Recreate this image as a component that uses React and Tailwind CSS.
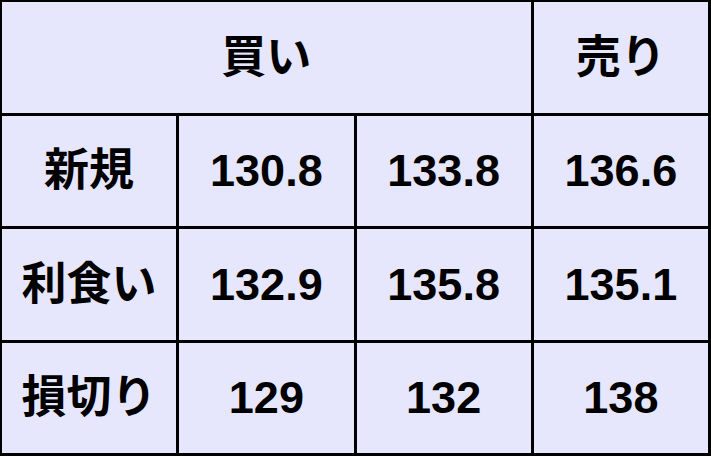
export default function App() {
  const font = { fontFamily: '"Liberation Sans", Arial, "Noto Sans CJK JP", sans-serif' };
  const rows = [
    ["新規", "130.8", "133.8", "136.6"],
    ["利食い", "132.9", "135.8", "135.1"],
    ["損切り", "129", "132", "138"],
  ];
  const cell = "bg-[#e6e6fc] flex items-center justify-center text-[45px] font-bold text-black leading-none";
  return (
    <div className="w-[711px] h-[456px] bg-black pt-[2px] pl-[2px] pr-[3px] pb-[3px]" style={font}>
      <div className="grid grid-cols-4 grid-rows-4 gap-[3px] w-full h-full">
        <div className={`${cell} col-span-3`}>買い</div>
        <div className={cell}>売り</div>
        {rows.map((r) =>
          r.map((t, i) => (
            <div key={r[0] + i} className={cell}>
              {t}
            </div>
          ))
        )}
      </div>
    </div>
  );
}
